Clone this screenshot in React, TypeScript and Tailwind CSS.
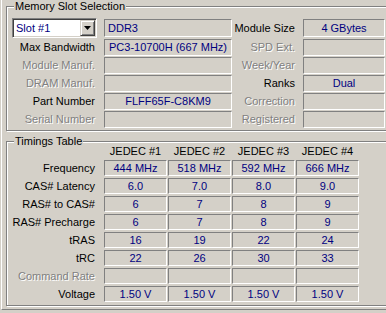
import React from 'react';

const sunken = 'border border-t-[#808080] border-l-[#808080] border-b-white border-r-white';

const Label = ({ text, off, w }: { text: string; off?: boolean; w: string }) => (
  <div
    className={`${w} shrink-0 text-right whitespace-nowrap leading-[13px] ${
      off ? 'text-[#808080] [text-shadow:1px_1px_0_#fff]' : 'text-black'
    }`}
  >
    {text}
  </div>
);

const Field = ({ value, w, left }: { value?: string; w: string; left?: boolean }) => (
  <div
    className={`${w} h-full shrink-0 ${sunken} flex items-center text-[#000080] whitespace-nowrap leading-[13px] ${
      left ? 'justify-start pl-[3px]' : 'justify-center'
    }`}
  >
    {value}
  </div>
);

const Group = ({ title, className, children }: { title: string; className: string; children: React.ReactNode }) => (
  <div className={`relative border border-[#808080] shadow-[inset_1px_1px_0_#fff,1px_1px_0_#fff] ${className}`}>
    <span className="absolute left-[7px] top-[-7px] px-[1px] bg-[#d4d0c8] leading-[13px] whitespace-nowrap">
      {title}
    </span>
    {children}
  </div>
);

const slotRows = [
  { l: 'Max Bandwidth', v: 'PC3-10700H (667 MHz)', l2: 'SPD Ext.', off2: true },
  { l: 'Module Manuf.', off: true, l2: 'Week/Year', off2: true },
  { l: 'DRAM Manuf.', off: true, l2: 'Ranks', v2: 'Dual' },
  { l: 'Part Number', v: 'FLFF65F-C8KM9', l2: 'Correction', off2: true },
  { l: 'Serial Number', off: true, l2: 'Registered', off2: true },
];

const timings: { l: string; v: string[]; off?: boolean }[] = [
  { l: 'Frequency', v: ['444 MHz', '518 MHz', '592 MHz', '666 MHz'] },
  { l: 'CAS# Latency', v: ['6.0', '7.0', '8.0', '9.0'] },
  { l: 'RAS# to CAS#', v: ['6', '7', '8', '9'] },
  { l: 'RAS# Precharge', v: ['6', '7', '8', '9'] },
  { l: 'tRAS', v: ['16', '19', '22', '24'] },
  { l: 'tRC', v: ['22', '26', '30', '33'] },
  { l: 'Command Rate', v: ['', '', '', ''], off: true },
  { l: 'Voltage', v: ['1.50 V', '1.50 V', '1.50 V', '1.50 V'] },
];

export default function App() {
  return (
    <div className="w-[386px] h-[313px] overflow-hidden bg-[#d4d0c8] text-[11px] text-black font-['Liberation_Sans',Arial,sans-serif]">
      <div className="ml-[1px] w-[480px] h-[310px] border-l border-b border-l-white border-b-[#808080] pl-[4px] pt-[6px]">
        <Group title="Memory Slot Selection" className="w-[460px] h-[125px]">
          <div className="pt-[11px] pl-[5px] flex flex-col">
            <div className="flex items-start h-[20px]">
              {/* slot combo */}
              <div className="w-[85px] h-[20px] border border-t-[#808080] border-l-[#808080] border-b-white border-r-white shadow-[inset_1px_1px_0_#404040,inset_-1px_-1px_0_#d4d0c8] p-[1px] flex">
                <div className="flex-1 bg-white flex items-center pl-[2px] text-[#000080] leading-[13px]">Slot #1</div>
                <div className="w-[15px] h-[16px] bg-[#d4d0c8] border border-t-[#d4d0c8] border-l-[#d4d0c8] border-b-[#404040] border-r-[#404040] shadow-[inset_1px_1px_0_#fff,inset_-1px_-1px_0_#808080] flex items-center justify-center">
                  <svg width="7" height="4" viewBox="0 0 7 4">
                    <path d="M0 0h7L3.5 4z" fill="#000" />
                  </svg>
                </div>
              </div>
              <div className="ml-[7px] mt-[1px] h-[18px] flex">
                <Field value="DDR3" w="w-[128px]" left />
              </div>
              <div className="h-[20px] flex items-center">
                <Label text="Module Size" w="w-[63px]" />
              </div>
              <div className="ml-[8px] mt-[1px] h-[18px] flex">
                <Field value="4 GBytes" w="w-[82px]" />
              </div>
            </div>
            {slotRows.map((r) => (
              <div key={r.l} className="mt-[1px] h-[17px] flex items-center">
                <Label text={r.l} off={r.off} w="w-[83px]" />
                <div className="ml-[9px] h-full flex">
                  <Field value={r.v} w="w-[128px]" />
                </div>
                <Label text={r.l2} off={r.off2} w="w-[63px]" />
                <div className="ml-[8px] h-full flex">
                  <Field value={r.v2} w="w-[82px]" />
                </div>
              </div>
            ))}
          </div>
        </Group>

        <Group title="Timings Table" className="mt-[10px] w-[460px] h-[165px]">
          <div className="pt-[3px] pl-[5px] flex flex-col gap-[2px]">
            <div className="h-[13px] flex items-center">
              <div className="w-[83px] shrink-0" />
              <div className="ml-[9px] flex gap-[1px]">
                {['JEDEC #1', 'JEDEC #2', 'JEDEC #3', 'JEDEC #4'].map((h) => (
                  <div key={h} className="w-[63px] text-center leading-[13px] whitespace-nowrap">
                    {h}
                  </div>
                ))}
              </div>
            </div>
            {timings.map((r) => (
              <div key={r.l} className="h-[16px] flex items-center">
                <Label text={r.l} off={r.off} w="w-[83px]" />
                <div className="ml-[9px] h-full flex gap-[1px]">
                  {r.v.map((v, i) => (
                    <Field key={i} value={v} w="w-[63px]" />
                  ))}
                </div>
              </div>
            ))}
          </div>
        </Group>
      </div>
    </div>
  );
}
